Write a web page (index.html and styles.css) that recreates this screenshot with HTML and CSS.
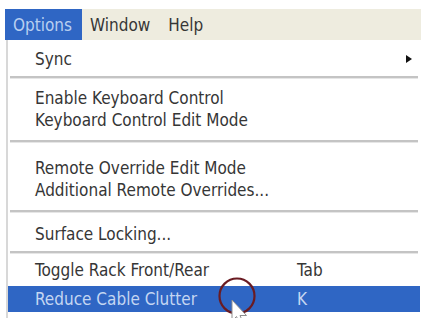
FILE: index.html
```html
<!DOCTYPE html>
<html>
<head>
<meta charset="utf-8">
<link rel="stylesheet" href="styles.css">
</head>
<body>
<div class="menubar">
  <div class="menu-title active">Options</div>
  <div class="menu-title">Window</div>
  <div class="menu-title">Help</div>
</div>
<div class="dropdown">
  <div class="item"><span class="label">Sync</span><span class="arrow"></span></div>
  <div class="sep sep-1"></div>
  <div class="item"><span class="label">Enable Keyboard Control</span></div>
  <div class="item"><span class="label">Keyboard Control Edit Mode</span></div>
  <div class="sep sep-2"></div>
  <div class="item"><span class="label">Remote Override Edit Mode</span></div>
  <div class="item"><span class="label">Additional Remote Overrides...</span></div>
  <div class="sep sep-3"></div>
  <div class="item"><span class="label">Surface Locking...</span></div>
  <div class="sep sep-4"></div>
  <div class="item"><span class="label">Toggle Rack Front/Rear</span><span class="key">Tab</span></div>
  <div class="item selected"><span class="label">Reduce Cable Clutter</span><span class="key">K</span>
    <svg class="cursor" width="44" height="56" viewBox="0 0 44 56">
      <circle cx="22" cy="22" r="17.5" fill="none" stroke="#6a1b22" stroke-width="2.2"/>
      <path d="M17 26 L17 47 L21.5 42.5 L25 51 L28.5 49.5 L25 41.5 L31.5 41.5 Z" fill="#ffffff" stroke="#8f8f8f" stroke-width="1"/>
    </svg>
  </div>
</div>
</body>
</html>
```

FILE: styles.css
```css
html, body {
  margin: 0;
  padding: 0;
  background: #ffffff;
  overflow: hidden;
}
body {
  font-family: "DejaVu Sans Condensed", "DejaVu Sans", sans-serif;
  font-size: 17px;
  color: #363636;
}
.menubar {
  margin: 9px 0 0 5px;
  width: 416px;
  height: 31px;
  display: flex;
  align-items: center;
  background: #eeecdf;
}
.menu-title {
  height: 100%;
  display: flex;
  align-items: center;
  padding: 0 10px 0 8px;
}
.menu-title.active {
  background: #2f66c4;
  color: #b8cff0;
  width: 59px;
  padding: 0 10px 0 8px;
}
.dropdown {
  margin-left: 6px;
  width: 412px;
  border-left: 2px solid #d8d8d8;
  background: #ffffff;
  padding: 8px 0 8px 0;
}
.item {
  position: relative;
  height: 22px;
  display: flex;
  align-items: center;
  padding-left: 27px;
}
.label {
  width: 262px;
}
.key {
  flex: none;
}
.arrow {
  margin-left: auto;
  margin-right: 8px;
  width: 0;
  height: 0;
  border-top: 4px solid transparent;
  border-bottom: 4px solid transparent;
  border-left: 6px solid #111;
}
.sep {
  margin: 0 2px 0 2px;
  height: 2px;
  background: #c4c4c4;
  border-bottom: 1px solid #e6e6e6;
}
.sep-1 { margin-top: 6px; margin-bottom: 8px; }
.sep-2 { margin-top: 9px; margin-bottom: 14px; }
.sep-3 { margin-top: 9px; margin-bottom: 10px; }
.sep-4 { margin-top: 6px; margin-bottom: 5px; }
.item.selected {
  height: 26px;
  margin-top: 5px;
  background: #2f66c4;
  color: #c4d6f2;
}
.cursor {
  position: absolute;
  left: 207px;
  top: -12px;
  overflow: visible;
}
```
